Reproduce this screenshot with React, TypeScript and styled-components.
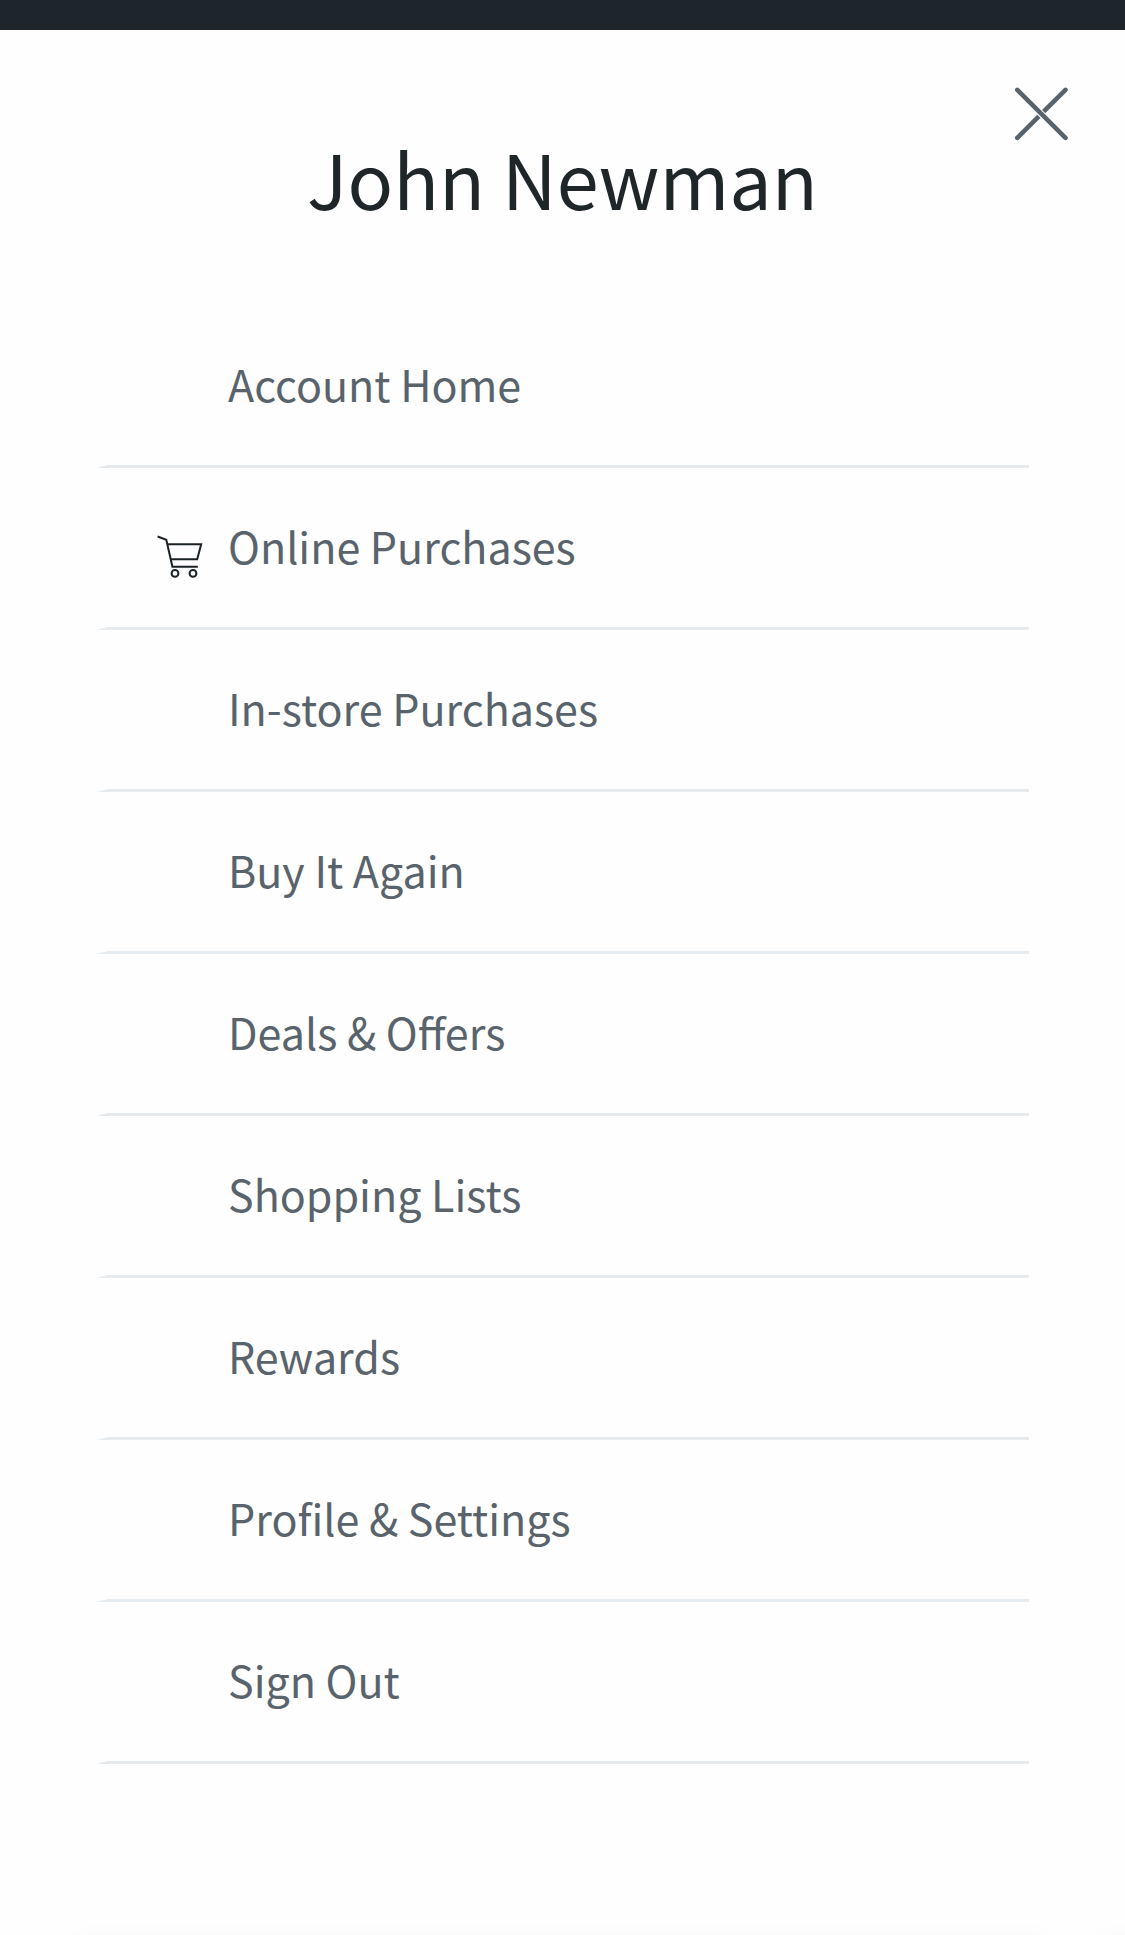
import React from "react";
import styled, { createGlobalStyle } from "styled-components";

const GlobalStyle = createGlobalStyle`
  *, *::before, *::after { box-sizing: border-box; }
  body {
    margin: 0;
    background: #fefefe;
    font-family: "Noto Sans CJK SC", "Noto Sans CJK JP", "Noto Sans", sans-serif;
  }
`;

const Page = styled.div`
  display: flex;
  flex-direction: column;
  height: 1935px;
  overflow: hidden;
`;

const TopBar = styled.div`
  flex: none;
  height: 30px;
  background: #1e262c;
`;

const Panel = styled.main`
  flex: none;
  display: flex;
  flex-direction: column;
  height: 1905px;
  background: #fefefe;
`;

const PanelHeader = styled.header`
  flex: none;
  display: grid;
  grid-template-columns: 150px 1fr 150px;
  height: 276px;
`;

const UserName = styled.h1`
  grid-column: 2;
  margin: 92px 0 0;
  text-align: center;
  white-space: nowrap;
  font-size: 75.5px;
  line-height: 110px;
  font-weight: 400;
  color: #1e262a;
`;

const CloseButton = styled.button`
  justify-self: start;
  width: 56px;
  height: 56px;
  margin: 56px 0 0 38px;
  padding: 0;
  border: 0;
  background: none;

  svg { display: block; }
`;

const Menu = styled.ul`
  flex: none;
  margin: 0 96px;
  padding: 0;
  list-style: none;
`;

const MenuItem = styled.li`
  display: grid;
  grid-template-columns: 120px 1fr;
  height: 162px;
  border-left: 12px solid transparent;
  border-bottom: 3px solid #e6ebef;
`;

const IconSlot = styled.span`
  padding: 66px 0 0 47px;

  svg { display: block; }
`;

const MenuLink = styled.a`
  padding-top: 45px;
  font-size: 43px;
  line-height: 64px;
  white-space: nowrap;
  color: #59636c;
  text-decoration: none;
`;

const NextCards = styled.div`
  flex: none;
  display: flex;
  justify-content: flex-start;
  gap: 45px;
  padding-left: 75px;
`;

const NextCard = styled.div`
  flex: none;
  width: 975px;
  height: 60px;
  box-shadow: 0 0 24px rgba(0, 0, 0, 0.02);
`;

const CloseIcon = () => (
  <svg width="56" height="56" viewBox="0 0 56 56" fill="none" stroke="#59636c" strokeWidth="4.6" strokeLinecap="round">
    <path d="M4.3 51.9L28.3 27.9L52.5 3.9" />
    <path d="M22 21.7L34 33.7" stroke="#fefefe" strokeWidth="6.8" strokeLinecap="butt" />
    <path d="M4.3 3.9L52.5 51.9" />
  </svg>
);

const CartIcon = () => (
  <svg width="50" height="44" viewBox="0 0 50 44" fill="none" stroke="#1b2226" strokeWidth="2">
    <path d="M2.6 2.5L11.3 5.7L17.4 32.8H42.8" />
    <path d="M12.5 10.3H46.2L42.2 25.3H15.8" strokeLinejoin="miter" />
    <circle cx="20" cy="39.4" r="3.4" />
    <circle cx="38" cy="39.4" r="3.4" />
  </svg>
);

const items: { label: string; icon?: React.ReactNode }[] = [
  { label: "Account Home" },
  { label: "Online Purchases", icon: <CartIcon /> },
  { label: "In-store Purchases" },
  { label: "Buy It Again" },
  { label: "Deals & Offers" },
  { label: "Shopping Lists" },
  { label: "Rewards" },
  { label: "Profile & Settings" },
  { label: "Sign Out" },
];

export default function App() {
  return (
    <Page>
      <GlobalStyle />
      <TopBar />
      <Panel>
        <PanelHeader>
          <UserName>John Newman</UserName>
          <CloseButton aria-label="Close">
            <CloseIcon />
          </CloseButton>
        </PanelHeader>
        <Menu>
          {items.map((item) => (
            <MenuItem key={item.label}>
              <IconSlot>{item.icon}</IconSlot>
              <MenuLink>{item.label}</MenuLink>
            </MenuItem>
          ))}
        </Menu>
      </Panel>
      <NextCards>
        <NextCard />
        <NextCard />
      </NextCards>
    </Page>
  );
}
